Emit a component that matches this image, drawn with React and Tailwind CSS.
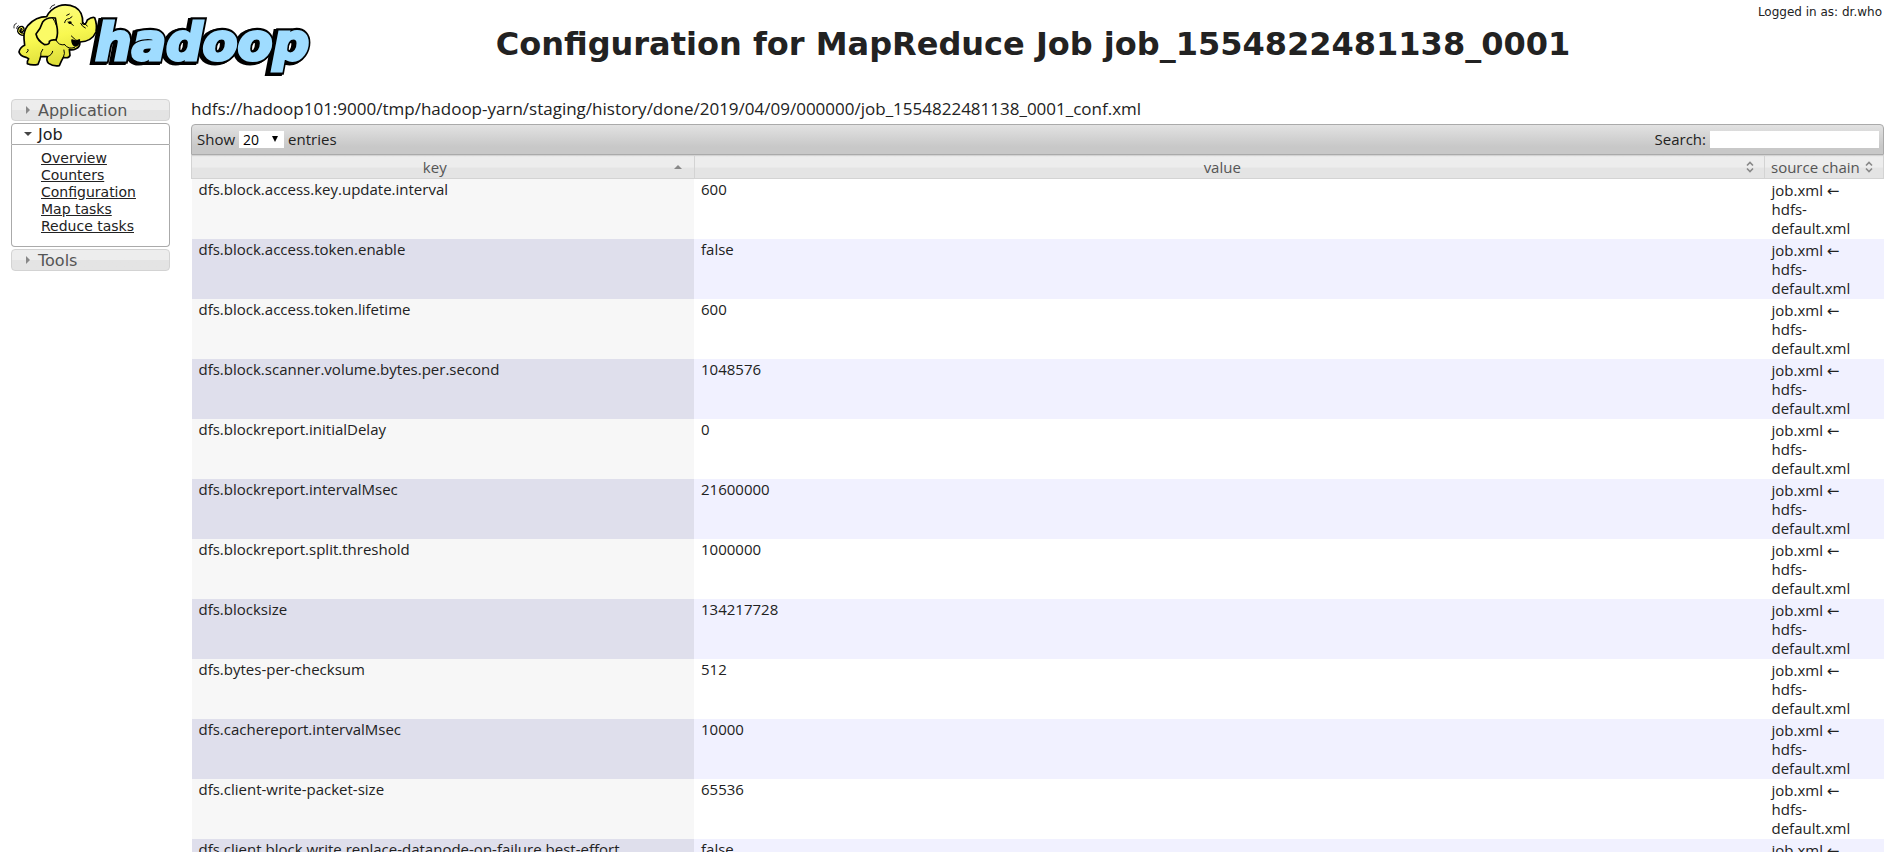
const ROWS = [
  ["dfs.block.access.key.update.interval", "600"],
  ["dfs.block.access.token.enable", "false"],
  ["dfs.block.access.token.lifetime", "600"],
  ["dfs.block.scanner.volume.bytes.per.second", "1048576"],
  ["dfs.blockreport.initialDelay", "0"],
  ["dfs.blockreport.intervalMsec", "21600000"],
  ["dfs.blockreport.split.threshold", "1000000"],
  ["dfs.blocksize", "134217728"],
  ["dfs.bytes-per-checksum", "512"],
  ["dfs.cachereport.intervalMsec", "10000"],
  ["dfs.client-write-packet-size", "65536"],
  ["dfs.client.block.write.replace-datanode-on-failure.best-effort", "false"],
];

const JOB_LINKS = ["Overview", "Counters", "Configuration", "Map tasks", "Reduce tasks"];

function Logo() {
  return (
    <svg viewBox="0 0 960 240" className="block h-20 w-80" role="img" aria-label="hadoop">
      <defs>
        <linearGradient id="hide" x1="0" y1="0" x2="0.3" y2="1">
          <stop offset="0" stopColor="#ffff8c" />
          <stop offset="0.6" stopColor="#f8f850" />
          <stop offset="1" stopColor="#dede3a" />
        </linearGradient>
      </defs>
      <g
        fontFamily="'DejaVu Sans', sans-serif"
        fontWeight="700"
        fontStyle="italic"
        fontSize="153"
        strokeLinejoin="miter"
      >
        <text x="278" y="182" fill="#000" stroke="#000" strokeWidth="24" aria-hidden="true">hadoop</text>
        <text x="285" y="180" fill="#000" stroke="#000" strokeWidth="22" aria-hidden="true">hadoop</text>
        <text x="286" y="179" fill="#9fdcff" stroke="#9fdcff" strokeWidth="9">hadoop</text>
      </g>
      <g stroke="#000" strokeWidth="5" strokeLinecap="round" strokeLinejoin="round">
        <path fill="none" strokeWidth="2.5" d="M150 26Q153 16 164 14M158 30Q160 24 168 22M42 84Q40 73 49 70M50 86Q49 79 55 77" />
        <path fill="none" strokeWidth="10" d="M80 102Q60 106 56 94Q56 82 66 82Q73 88 66 93" />
        <path fill="none" stroke="#f5f552" strokeWidth="3" d="M80 102Q60 106 56 94Q56 82 66 82Q73 88 66 93" />
        <path
          fill="url(#hide)"
          d="M140 50Q108 50 84 76Q70 94 72 116L74 136Q60 142 57 156Q60 168 78 172L86 176Q80 184 82 191Q96 197 114 193Q120 180 122 170L142 170Q138 182 146 190Q160 200 178 197Q184 182 190 172Q206 176 210 166L208 148Q216 152 228 146Q240 142 240 126Q276 124 288 96Q292 74 284 53Q276 50 262 60Q256 78 248 70Q250 36 226 22Q200 10 176 18Q150 28 140 50Z"
        />
        <path fill="#fbfb66" d="M166 54Q140 50 128 66Q122 86 108 102Q112 122 134 134Q150 134 148 124Q154 118 168 120Q176 100 170 76Z" />
        <path fill="none" strokeWidth="3" d="M170 78Q164 62 158 54M168 120Q176 138 194 134M194 134Q206 150 224 142M240 126Q226 122 214 108M122 170Q120 158 128 148M190 172Q196 160 192 150M84 148Q88 152 80 158M142 170Q156 166 158 154" />
        <path fill="#000" d="M216 120Q230 126 238 120Q236 138 226 138Q216 134 216 120Z" />
        <path fill="none" strokeWidth="3" d="M194 68Q196 56 208 56L216 50M204 66Q212 68 220 76M242 70Q246 80 256 84M248 66L262 78M200 46L208 42" />
        <ellipse cx="210" cy="68" rx="5" ry="4" fill="#000" stroke="none" />
      </g>
    </svg>
  );
}

function Triangle({ dir, className }) {
  const d = { right: "M2 0L6 4L2 8Z", down: "M0 2H8L4 6Z", up: "M0 6H8L4 2Z" }[dir];
  return (
    <svg viewBox="0 0 8 8" className={`size-2 shrink-0 ${className}`} aria-hidden="true">
      <path d={d} fill="currentColor" />
    </svg>
  );
}

function SortBoth() {
  return (
    <svg viewBox="0 0 8 12" className="h-3 w-2 shrink-0 text-[#888]" aria-hidden="true">
      <path d="M1 4.500L4 1.500L7 4.500M1 7.500L4 10.500L7 7.500" fill="none" stroke="currentColor" strokeWidth="1.6" />
    </svg>
  );
}

function SectionHeader({ title, open }) {
  return (
    <button
      type="button"
      aria-expanded={open}
      className={
        open
          ? "flex h-[22px] w-full items-center gap-1.5 rounded-t border border-[#aaa] bg-white pl-3 text-left text-[#212121]"
          : "flex h-[22px] w-full items-center gap-1.5 rounded border border-[#d3d3d3] bg-linear-to-b from-[#ededed] from-50% to-[#e4e4e4] to-50% pl-3 text-left text-[#555]"
      }
    >
      <Triangle dir={open ? "down" : "right"} className={open ? "text-[#454545]" : "text-[#888]"} />
      <span className="pt-px text-base leading-5">{title}</span>
    </button>
  );
}

const TH = "border border-[#d3d3d3] bg-linear-to-b from-[#ededed] from-50% to-[#e4e4e4] to-50% p-0 font-normal text-[#555]";

export default function App() {
  return (
    <div className="h-screen overflow-hidden bg-white font-['DejaVu_Sans',sans-serif] text-[#222]">
      <header className="flex h-[99px] items-start">
        <div className="w-80 shrink-0">
          <Logo />
        </div>
        <h1 className="flex-1 pt-6 pr-3 text-center text-[32px] leading-10 font-bold whitespace-nowrap">
          Configuration for MapReduce Job job_1554822481138_0001
        </h1>
        <p className="shrink-0 pt-1 pr-4 text-right text-xs leading-4">Logged in as: dr.who</p>
      </header>

      <div className="flex items-start pr-3.5">
        <nav className="mr-[21px] ml-[11px] flex w-[159px] shrink-0 flex-col gap-0.5">
          <SectionHeader title="Application" open={false} />
          <div>
            <SectionHeader title="Job" open />
            <ul className="h-[102px] rounded-b border border-t-0 border-[#aaa] pt-[5px] pl-[29px] text-sm leading-[17px]">
              {JOB_LINKS.map((l) => (
                <li key={l}>
                  <a href="#" className="underline">
                    {l}
                  </a>
                </li>
              ))}
            </ul>
          </div>
          <SectionHeader title="Tools" open={false} />
        </nav>

        <main className="min-w-0 flex-1 font-['Open_Sans',sans-serif] text-[15px]">
          <h2 className="h-[25px] text-[17px] leading-5">
            hdfs://hadoop101:9000/tmp/hadoop-yarn/staging/history/done/2019/04/09/000000/job_1554822481138_0001_conf.xml
          </h2>
          <div className="flex h-[31px] items-center justify-between rounded-t border border-[#aaa] bg-linear-to-b from-[#e2e2e2] to-[#c8c8c8] to-75% pr-1 pl-[5px]">
            <label className="flex items-center gap-1">
              Show
              <span className="relative flex">
                <select defaultValue="20" className="h-[17px] w-[45px] appearance-none bg-white pl-1 text-sm leading-4 text-black">
                  <option>20</option>
                  <option>40</option>
                  <option>60</option>
                  <option>80</option>
                  <option>100</option>
                </select>
                <svg viewBox="0 0 6 6" className="pointer-events-none absolute top-[5px] right-1.5 size-1.5" aria-hidden="true">
                  <path d="M0 0H6L3 6Z" />
                </svg>
              </span>
              entries
            </label>
            <label className="flex items-center gap-1">
              Search:
              <input type="text" className="h-[17px] w-[169px] bg-white px-1 text-sm" />
            </label>
          </div>

          <table className="w-full table-fixed border-collapse">
            <colgroup>
              <col className="w-[29.7%]" />
              <col />
              <col className="w-[119px]" />
            </colgroup>
            <thead>
              <tr>
                <th className={TH}>
                  <div className="flex h-[22px] items-center pr-3">
                    <span className="flex-1 pl-1 text-center">key</span>
                    <Triangle dir="up" className="text-[#888]" />
                  </div>
                </th>
                <th className={TH}>
                  <div className="flex h-[22px] items-center pr-2.5">
                    <span className="flex-1 pl-1 text-center">value</span>
                    <SortBoth />
                  </div>
                </th>
                <th className={TH}>
                  <div className="flex h-[22px] items-center justify-between pr-2.5 pl-1.5 whitespace-nowrap">
                    source chain
                    <SortBoth />
                  </div>
                </th>
              </tr>
            </thead>
            <tbody>
              {ROWS.map(([key, value]) => (
                <tr key={key} className="group h-[60px] align-top even:bg-[#f1f1ff]">
                  <td className="bg-[#f7f7f7] px-[7px] py-0 leading-5 whitespace-nowrap group-even:bg-[#dfdfec]">{key}</td>
                  <td className="px-[7px] py-0 leading-5">{value}</td>
                  <td className="px-[7px] pt-0.5 pb-0 leading-[19px]">
                    job.xml <span className="font-['DejaVu_Sans',sans-serif] leading-none">←</span> hdfs-default.xml
                  </td>
                </tr>
              ))}
            </tbody>
          </table>
        </main>
      </div>
    </div>
  );
}
